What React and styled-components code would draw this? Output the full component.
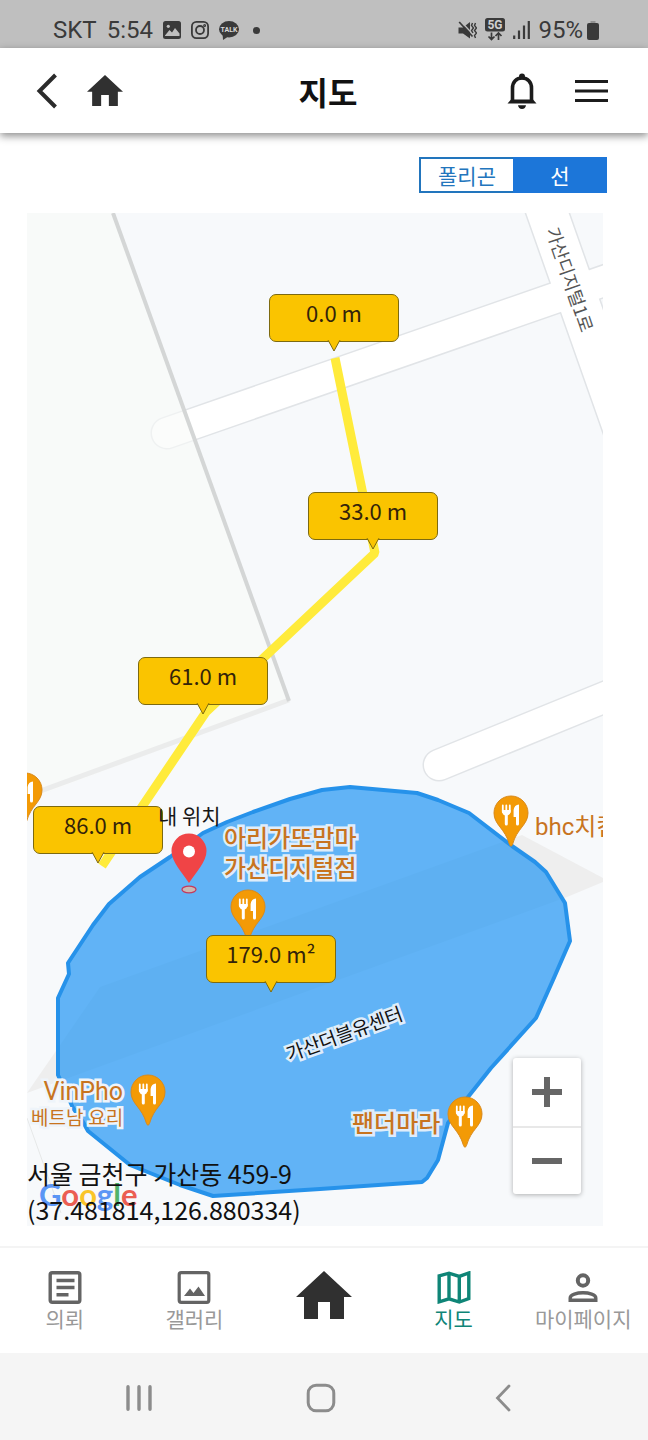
import React, { useState } from 'react'
import styled, { createGlobalStyle } from 'styled-components'

const distances = [
    { text: '0.0 m', x: 242, y: 81 },
    { text: '33.0 m', x: 281, y: 279 },
    { text: '61.0 m', x: 111, y: 444 },
    { text: '86.0 m', x: 6, y: 593 },
    { text: '179.0 m²', x: 179, y: 722 },
]

const restaurants = [
    { x: -20, y: 559 },
    { x: 466, y: 582 },
    { x: 203, y: 676 },
    { x: 103, y: 861 },
    { x: 420, y: 883 },
]

const places = [
    { lines: ['bhc치킨'], x: 508, y: 599 },
    { lines: ['아리가또맘마', '가산디지털점'], x: 197, y: 611, halo: '#dfedfa' },
    { lines: ['팬더마라'], x: 325, y: 896, halo: '#dfedfa' },
]

const tabs = [
    { id: 'request', label: '의뢰' },
    { id: 'gallery', label: '갤러리' },
    { id: 'home', label: '' },
    { id: 'map', label: '지도' },
    { id: 'mypage', label: '마이페이지' },
]

const HouseIcon = ({ width, height }) => (
    <svg width={width} height={height} viewBox="0 0 56 48" preserveAspectRatio="none">
        <path d="M28 0 L56 26 H48 V48 H34 V31 H22 V48 H8 V26 H0 Z" fill="#303030" />
    </svg>
)

const TabIcon = ({ id }) => {
    if (id === 'home') return <HouseIcon width="56" height="48" />
    return (
        <svg width="34" height="33" viewBox="0 0 34 33" fill="none" stroke="currentColor" strokeWidth="3.4">
            {id === 'request' && (
                <>
                    <rect x="2.2" y="1.7" width="29.6" height="29.6" rx="2" />
                    <path d="M8.5 9.5H26.5M8.5 16.5H26.5M8.5 23.8H20.5" />
                </>
            )}
            {id === 'gallery' && (
                <>
                    <rect x="2.2" y="1.7" width="29.6" height="29.6" rx="2" strokeWidth="3.2" />
                    <path d="M7 25 L13 17.5 L16.5 22 L21.5 15.5 L28 25 Z" fill="currentColor" stroke="none" />
                </>
            )}
            {id === 'map' && (
                <path d="M2.2 4.8 L12 2.2 L22.3 5.4 L31.8 2 V27.5 L22.3 31 L12 27.8 L2.2 30.8 Z M12 2.2 V27.8 M22.3 5.4 V31" />
            )}
            {id === 'mypage' && (
                <>
                    <circle cx="17" cy="9.5" r="5.2" strokeWidth="4" />
                    <path d="M4.2 29.3 V27 C4.2 23.5 11 21.8 17 21.8 S29.8 23.5 29.8 27 V29.3 Z" strokeWidth="3.4" />
                </>
            )}
        </svg>
    )
}

const RestaurantPin = ({ x, y }) => (
    <PinSpot style={{ left: x, top: y }}>
        <svg width="36" height="53" viewBox="0 0 36 53">
            <path
                d="M18 1 A17 17 0 0 1 35 18 C35 30 24 33 19.5 49.5 Q18 53 16.5 49.5 C12 33 1 30 1 18 A17 17 0 0 1 18 1 Z"
                fill="#f39a06"
                stroke="#d98a1c"
            />
            <path d="M9.8 10.5 V17 M13.3 10.5 V17 M16.8 10.5 V17" stroke="#fff" strokeWidth="1.8" strokeLinecap="round" />
            <path d="M8.9 15 H17.7 Q17.7 20.5 13.3 20.5 Q8.9 20.5 8.9 15 Z" fill="#fff" />
            <path d="M13.3 18 V29" stroke="#fff" strokeWidth="3" strokeLinecap="round" />
            <path d="M26 9.5 V29 Q26 30.5 24.5 30.5 Q23 30.5 23 29 V22 H20.6 V15 Q21.3 9.8 26 9.5 Z" fill="#fff" />
        </svg>
    </PinSpot>
)

const MapDrawing = () => (
    <Drawing>
        <rect width="100%" height="100%" fill="#f7f9fb" />
        <g fill="none" stroke="#e1e4e7" strokeLinecap="round">
            <path d="M140 220 L620 53" strokeWidth="33" />
            <path d="M513 -21 L618 277" strokeWidth="43" />
            <path d="M412 552 L620 467" strokeWidth="33" />
        </g>
        <g fill="none" stroke="#fff" strokeLinecap="round">
            <path d="M140 220 L620 53" strokeWidth="30" />
            <path d="M513 -21 L618 277" strokeWidth="40" />
            <path d="M412 552 L620 467" strokeWidth="30" />
        </g>
        <path d="M0 0 H85 L262 488 L0 587 Z" fill="#f8faf9" fillOpacity="0.6" />
        <path d="M262 487 L0 583" stroke="#ebecec" strokeWidth="5" />
        <path d="M86 0 L262 488" stroke="#d4d6d6" strokeWidth="4" />
        <path d="M0 880 L73 774 L495 622 L576 665 V669 L540 684 Z" fill="#eeeeee" />
        <path d="M0 905 L34 1000" stroke="#e6e8e8" />
        <path
            d="M323 574 L390 580 L411 587 L442 600 L485 633 L508 649 L519 659 L538 690 L543 728 L526 767 L509 805 L464 855
                L441 884 L421 910 L411 947 L400 965 L395 969 L293 976 L186 983 L153 972 L103 952 L61 918 L56 909 L46 895
                L31 862 V785 L42 761 L41 750 L66 712 L82 691 L113 664 L143 644 L176 620 L200 609 L226 599 L263 586 L295 577 Z"
            fill="#2196f3"
            fillOpacity="0.7"
            stroke="#2692ea"
            strokeWidth="4"
            strokeLinejoin="round"
        />
        <path d="M308 145 L348 340 L179 499 L75 653" fill="none" stroke="#ffeb3b" strokeWidth="9" strokeLinejoin="bevel" />
    </Drawing>
)

const App = () => {
    const [mode, setMode] = useState('line')
    const [currentTab, setCurrentTab] = useState('map')

    return (
        <>
            <GlobalStyle />
            <Page>
                <StatusBar>
                    <StatusGroup $gap="10px">
                        <span>SKT</span>
                        <span>5:54</span>
                        <svg width="18" height="18" viewBox="0 0 18 18">
                            <rect width="18" height="18" rx="2.5" fill="#3a3a3a" />
                            <path d="M2 14.5 L6.5 9 L9 11.5 L12 7 L16.5 12.5 V15 H2 Z" fill="#bfbfbf" />
                            <circle cx="5.3" cy="5.3" r="1.6" fill="#bfbfbf" />
                        </svg>
                        <svg width="18" height="18" viewBox="0 0 18 18" fill="none" stroke="#3a3a3a" strokeWidth="1.8">
                            <rect x="0.9" y="0.9" width="16.2" height="16.2" rx="4.5" />
                            <circle cx="9" cy="9" r="4" />
                            <circle cx="13.6" cy="4.4" r="0.6" />
                        </svg>
                        <svg width="20" height="19" viewBox="0 0 20 19">
                            <ellipse cx="10" cy="8.2" rx="10" ry="8.2" fill="#3a3a3a" />
                            <path d="M3.5 12 L4 19 L10 15 Z" fill="#3a3a3a" />
                            <text x="10" y="10.7" textAnchor="middle" fontSize="7" fontWeight="700" fill="#d8d8d8">TALK</text>
                        </svg>
                        <Dot />
                    </StatusGroup>
                    <StatusGroup $gap="8px">
                        <svg width="19" height="19" viewBox="0 0 19 19">
                            <path d="M0.5 6.5 H5 L12 1 V17.5 L5 12.5 H0.5 Z" fill="#3a3a3a" />
                            <path d="M2.5 0 L17 15.5" stroke="#bfbfbf" strokeWidth="1.4" />
                            <path d="M1.2 1 L14.5 15.5" stroke="#3a3a3a" strokeWidth="1.7" />
                            <path d="M14.5 2 L13.5 4.5 L15.5 7 L13.5 9.5 L15 12 M17.5 2 L16.5 4.5 L18.5 7 L16.5 9.5 L18.5 12 L16.5 14.5 L17.5 17" fill="none" stroke="#3a3a3a" strokeWidth="1.4" />
                        </svg>
                        <svg width="20" height="24" viewBox="0 0 20 24">
                            <rect width="20" height="13.5" rx="2.5" fill="#3a3a3a" />
                            <text x="10" y="11" textAnchor="middle" fontSize="12" fontWeight="700" fill="#d0d0d0">5G</text>
                            <path d="M6.5 14.5 V21.5 M3.5 18.5 L6.5 21.5 L9.5 18.5 M13.5 22 V15 M10.5 18 L13.5 15 L16.5 18" fill="none" stroke="#3a3a3a" strokeWidth="1.7" />
                        </svg>
                        <svg width="17" height="18" viewBox="0 0 17 18" stroke="#3a3a3a" strokeWidth="2.2">
                            <path d="M1.2 14.5V18M6 9.5V18M11 4.5V18M15.8 0V18" />
                        </svg>
                        <Battery>
                            <span>95%</span>
                            <svg width="12" height="19" viewBox="0 0 12 19">
                                <path d="M3.5 0 H8.5 V3 H3.5 Z" fill="#929292" />
                                <rect y="2" width="12" height="17" rx="2" fill="#3a3a3a" />
                            </svg>
                        </Battery>
                    </StatusGroup>
                </StatusBar>

                <Header>
                    <HeaderGroup $gap="26px">
                        <IconButton $width="28px" aria-label="뒤로">
                            <svg width="22" height="36" viewBox="0 0 22 36" fill="none" stroke="#2b2b2b" strokeWidth="4">
                                <path d="M19.5 2 L3.5 18 L19.5 34" />
                            </svg>
                        </IconButton>
                        <IconButton $width="36px" aria-label="홈">
                            <HouseIcon width="36" height="31" />
                        </IconButton>
                    </HeaderGroup>
                    <Title>지도</Title>
                    <HeaderGroup $gap="5px" $end>
                        <IconButton $width="64px" aria-label="알림">
                            <svg width="30" height="36" viewBox="0 0 30 36">
                                <path d="M5.5 29 V15 C5.5 9 9.5 5 15 5 S24.5 9 24.5 15 V29" fill="none" stroke="#1c1c1c" strokeWidth="3.6" />
                                <circle cx="15" cy="3.5" r="3" fill="#1c1c1c" />
                                <path d="M0.5 30.5 L4 26.5 H26 L29.5 30.5 Z M11 32.3 H19 Q18.5 36 15 36 Q11.5 36 11 32.3 Z" fill="#1c1c1c" />
                            </svg>
                        </IconButton>
                        <IconButton $width="64px" aria-label="메뉴">
                            <svg width="33" height="22" viewBox="0 0 33 22" stroke="#1c1c1c" strokeWidth="3">
                                <path d="M0 1.5H33M0 11H33M0 20.5H33" />
                            </svg>
                        </IconButton>
                    </HeaderGroup>
                </Header>

                <Toolbar>
                    <ModeButton $active={mode === 'polygon'} aria-pressed={mode === 'polygon'} onClick={() => setMode('polygon')}>
                        폴리곤
                    </ModeButton>
                    <ModeButton $active={mode === 'line'} aria-pressed={mode === 'line'} onClick={() => setMode('line')}>
                        선
                    </ModeButton>
                </Toolbar>

                <MapArea>
                    <MapDrawing />
                    <StreetName $angle="71deg" $size="18px" style={{ left: 544, top: 66 }}>가산디지털1로</StreetName>
                    <StreetName $angle="-20deg" $size="19px" $halo="#dfedfa" style={{ left: 317, top: 820 }}>가산더블유센터</StreetName>
                    {restaurants.map((pin, index) => (
                        <RestaurantPin key={index} x={pin.x} y={pin.y} />
                    ))}
                    {places.map((place) => (
                        <PlaceName key={place.lines[0]} $halo={place.halo} style={{ left: place.x, top: place.y }}>
                            {place.lines.map((line) => <span key={line}>{line}</span>)}
                        </PlaceName>
                    ))}
                    <PlaceName $halo="#eef4fa" $right style={{ left: 4, top: 864 }}>
                        <span>VinPho</span>
                        <small>베트남 요리</small>
                    </PlaceName>
                    {distances.map((item) => (
                        <Balloon key={item.text} style={{ left: item.x, top: item.y }}>
                            {item.text}
                            <svg width="14" height="12" viewBox="0 0 14 12">
                                <path d="M1 0 L7 11 L13 0" fill="#fac400" stroke="#7d6a10" />
                                <path d="M1.8 0 H12.2" stroke="#fac400" strokeWidth="2" />
                            </svg>
                        </Balloon>
                    ))}
                    <MyPlace>
                        <span>내 위치</span>
                        <svg width="36" height="62" viewBox="0 0 36 62">
                            <path d="M18 0.5 A17.5 17.5 0 0 1 35.5 18 C35.5 29 25 39 18 50 C11 39 0.5 29 0.5 18 A17.5 17.5 0 0 1 18 0.5 Z" fill="#f04446" />
                            <circle cx="18" cy="18.5" r="6" fill="#fff" />
                            <ellipse cx="18" cy="56.5" rx="7" ry="3.3" fill="#c9b9b5" stroke="#c53a5c" strokeWidth="1.3" />
                        </svg>
                    </MyPlace>
                    <GoogleMark>
                        <Letter $color="#4285f4">G</Letter>
                        <Letter $color="#ea4335">o</Letter>
                        <Letter $color="#fbbc05">o</Letter>
                        <Letter $color="#4285f4">g</Letter>
                        <Letter $color="#34a853">l</Letter>
                        <Letter $color="#ea4335">e</Letter>
                    </GoogleMark>
                    <Address>
                        <span>서울 금천구 가산동 459-9</span>
                        <span>(37.481814,126.880334)</span>
                    </Address>
                    <ZoomControl>
                        <ZoomButton aria-label="확대">
                            <svg width="30" height="30" viewBox="0 0 30 30" stroke="#666" strokeWidth="6">
                                <path d="M0 15H30M15 0V30" />
                            </svg>
                        </ZoomButton>
                        <ZoomButton aria-label="축소">
                            <svg width="30" height="30" viewBox="0 0 30 30" stroke="#666" strokeWidth="6">
                                <path d="M0 15H30" />
                            </svg>
                        </ZoomButton>
                    </ZoomControl>
                </MapArea>

                <TabBar>
                    {tabs.map((tab) => (
                        <TabButton
                            key={tab.id}
                            $active={tab.id === currentTab}
                            aria-label={tab.label || '홈'}
                            onClick={() => setCurrentTab(tab.id)}
                        >
                            <TabIcon id={tab.id} />
                            {tab.label && <span>{tab.label}</span>}
                        </TabButton>
                    ))}
                </TabBar>

                <SystemBar>
                    <SystemButton aria-label="최근 앱">
                        <svg width="28" height="28" viewBox="0 0 28 28" stroke="#8c8c8c" strokeWidth="3.4" strokeLinecap="round">
                            <path d="M3 2.7V25.3M14 2.7V25.3M25 2.7V25.3" />
                        </svg>
                    </SystemButton>
                    <SystemButton aria-label="홈 화면">
                        <svg width="30" height="30" viewBox="0 0 30 30" fill="none" stroke="#8c8c8c" strokeWidth="3">
                            <rect x="2.2" y="2.2" width="25.6" height="25.6" rx="8" />
                        </svg>
                    </SystemButton>
                    <SystemButton aria-label="이전">
                        <svg width="16" height="28" viewBox="0 0 16 28" fill="none" stroke="#8c8c8c" strokeWidth="2.8" strokeLinecap="round">
                            <path d="M14 2 L2.5 14 L14 26" />
                        </svg>
                    </SystemButton>
                </SystemBar>
            </Page>
        </>
    )
}

const GlobalStyle = createGlobalStyle`
    * {
        box-sizing: border-box;
    }
    body {
        margin: 0;
        background: #fff;
        font-family: 'Noto Sans CJK KR', sans-serif;
    }
    button {
        padding: 0;
        border: 0;
        background: none;
        font-family: inherit;
        cursor: pointer;
    }
    svg {
        display: block;
        flex: none;
    }
`

const Page = styled.div`
    display: flex;
    flex-direction: column;
    min-height: 100vh;
`

const StatusBar = styled.div`
    display: flex;
    justify-content: space-between;
    height: 48px;
    padding: 12px 49px 0 53px;
    background: #bfbfbf;
    color: #3a3a3a;
    font-family: Roboto, sans-serif;
    font-size: 24px;
`

const StatusGroup = styled.div`
    display: flex;
    align-items: center;
    gap: ${({ $gap }) => $gap};
`

const Dot = styled.i`
    width: 7px;
    height: 7px;
    margin-left: 4px;
    border-radius: 50%;
    background: #3a3a3a;
`

const Battery = styled.div`
    display: flex;
    align-items: center;
    gap: 4px;
`

const Header = styled.header`
    display: grid;
    grid-template-columns: 1fr auto 1fr;
    align-items: center;
    height: 85px;
    padding: 0 25px 0 33px;
    background: #fff;
    box-shadow: 0 3px 8px rgba(0, 0, 0, 0.45);
`

const HeaderGroup = styled.div`
    display: flex;
    align-items: center;
    justify-content: ${({ $end }) => ($end ? 'flex-end' : 'flex-start')};
    gap: ${({ $gap }) => $gap};
`

const IconButton = styled.button`
    display: flex;
    align-items: center;
    justify-content: center;
    width: ${({ $width }) => $width};
    height: 48px;
`

const Title = styled.h1`
    margin: 0;
    color: #111;
    font-size: 32px;
    font-weight: 700;
    line-height: 44px;
`

const Toolbar = styled.div`
    display: flex;
    justify-content: flex-end;
    padding: 24px 41px 20px;
`

const ModeButton = styled.button`
    width: 94px;
    height: 36px;
    border: 2px solid ${({ $active }) => ($active ? '#1c76d9' : '#2275bd')};
    background: ${({ $active }) => ($active ? '#1c76d9' : '#fff')};
    color: ${({ $active }) => ($active ? '#fff' : '#2275bd')};
    font-size: 21px;
    line-height: 30px;

    &:first-child {
        border-right: 0;
    }
`

const MapArea = styled.main`
    position: relative;
    flex: 1;
    min-height: 1013px;
    margin: 0 45px 20px 27px;
    overflow: hidden;
`

const Drawing = styled.svg`
    position: absolute;
    inset: 0;
    width: 100%;
    height: 100%;
`

const PinSpot = styled.div`
    position: absolute;
`

const StreetName = styled.span`
    position: absolute;
    transform: translate(-50%, -50%) rotate(${({ $angle }) => $angle});
    color: ${({ $halo }) => ($halo ? '#111' : '#555')};
    font-size: ${({ $size }) => $size};
    line-height: 24px;
    white-space: nowrap;
    paint-order: stroke fill;
    -webkit-text-stroke: ${({ $halo }) => ($halo ? `5px ${$halo}` : '0')};
`

const PlaceName = styled.div`
    position: absolute;
    display: flex;
    flex-direction: column;
    align-items: ${({ $right }) => ($right ? 'flex-end' : 'flex-start')};
    color: #c8741f;
    font-family: Roboto, 'Noto Sans CJK KR', sans-serif;
    font-size: ${({ $right }) => ($right ? '25px' : '24px')};
    font-weight: ${({ $halo, $right }) => ($halo && !$right ? 500 : 400)};
    line-height: 30px;
    white-space: nowrap;
    paint-order: stroke fill;
    -webkit-text-stroke: ${({ $halo }) => ($halo ? `5px ${$halo}` : '0')};

    small {
        font-size: 19px;
        line-height: 24px;
    }
`

const Balloon = styled.div`
    position: absolute;
    width: 130px;
    height: 48px;
    border: 1px solid #7d6a10;
    border-radius: 7px;
    background: #fac400;
    color: #33230a;
    font-size: 22px;
    line-height: 34px;
    text-align: center;

    svg {
        position: absolute;
        top: 45px;
        left: 57px;
    }
`

const MyPlace = styled.div`
    position: absolute;
    top: 588px;
    left: 131px;
    display: flex;
    flex-direction: column;
    align-items: center;
    color: #161616;
    font-size: 21px;

    span {
        line-height: 28px;
        margin-bottom: 4px;
    }
`

const GoogleMark = styled.div`
    position: absolute;
    bottom: 12px;
    left: 12px;
    font-family: Lato, sans-serif;
    font-size: 31px;
    font-weight: 700;
    line-height: 40px;
    opacity: 0.85;
`

const Letter = styled.span`
    color: ${({ $color }) => $color};
`

const Address = styled.div`
    position: absolute;
    bottom: -1px;
    left: 0;
    display: flex;
    flex-direction: column;
    color: #111;
    font-size: 25px;
    line-height: 36px;
`

const ZoomControl = styled.div`
    position: absolute;
    right: 22px;
    bottom: 32px;
    width: 68px;
    border-radius: 3px;
    background: #fff;
    box-shadow: 0 1px 5px rgba(0, 0, 0, 0.3);
`

const ZoomButton = styled.button`
    display: flex;
    align-items: center;
    justify-content: center;
    width: 100%;
    height: 68px;

    & + & {
        border-top: 2px solid #e8e8e8;
    }
`

const TabBar = styled.nav`
    display: grid;
    grid-template-columns: repeat(5, 1fr);
    height: 107px;
    border-top: 2px solid #f4f4f4;
    background: #fff;
`

const TabButton = styled.button`
    display: flex;
    flex-direction: column;
    align-items: center;
    padding-top: 23px;
    color: ${({ $active }) => ($active ? '#0f8577' : '#646464')};

    span {
        color: ${({ $active }) => ($active ? '#0f8577' : '#999')};
        font-size: 21px;
        line-height: 28px;
        white-space: nowrap;
    }
`

const SystemBar = styled.footer`
    display: grid;
    grid-template-columns: repeat(3, 1fr);
    height: 87px;
    padding: 2px 54px 0 48px;
    background: #f5f5f5;
`

const SystemButton = styled.button`
    display: flex;
    align-items: center;
    justify-content: center;
`

export default App
